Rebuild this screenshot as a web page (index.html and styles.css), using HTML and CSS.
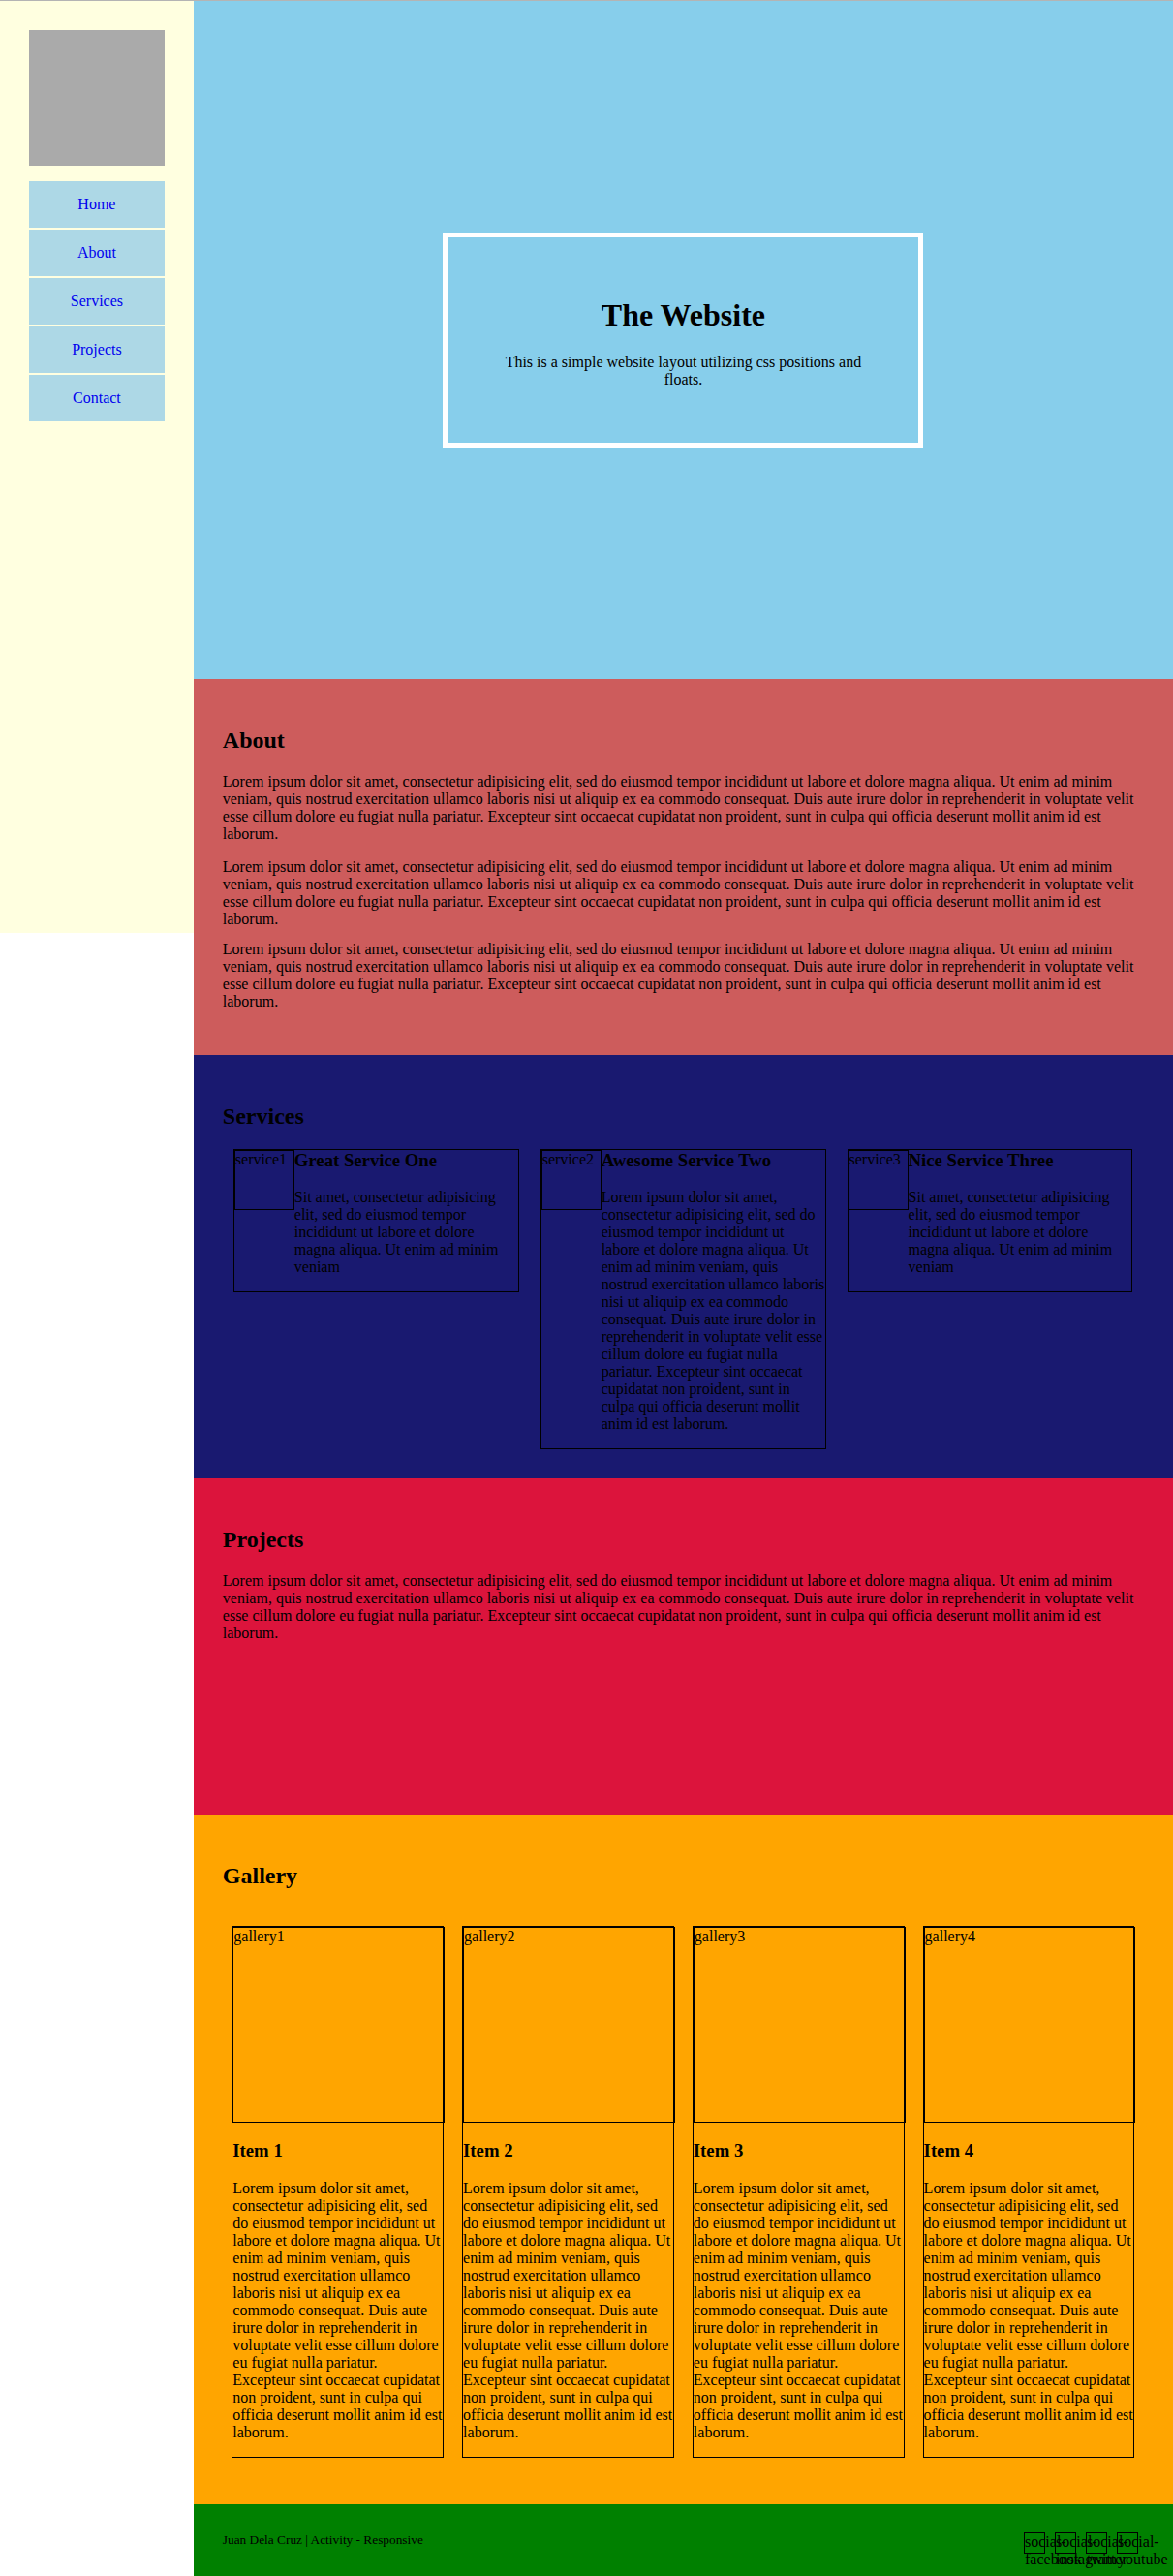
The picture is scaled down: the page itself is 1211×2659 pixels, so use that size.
FILE: index.html
```html
<!DOCTYPE html>
<html lang="en">
<head>
<meta charset="utf-8">
<title>The Website</title>
<link rel="stylesheet" href="styles.css">
</head>
<body>
<div class="page">
  <aside class="sidebar">
    <div class="logo"></div>
    <nav class="nav">
      <a href="#">Home</a>
      <a href="#">About</a>
      <a href="#">Services</a>
      <a href="#">Projects</a>
      <a href="#">Contact</a>
    </nav>
  </aside>
  <main class="main">
    <section class="hero">
      <div class="hero-box">
        <h1>The Website</h1>
        <p>This is a simple website layout utilizing css positions and floats.</p>
      </div>
    </section>

    <section class="section about">
      <h2>About</h2>
      <p>Lorem ipsum dolor sit amet, consectetur adipisicing elit, sed do eiusmod tempor incididunt ut labore et dolore magna aliqua. Ut enim ad minim veniam, quis nostrud exercitation ullamco laboris nisi ut aliquip ex ea commodo consequat. Duis aute irure dolor in reprehenderit in voluptate velit esse cillum dolore eu fugiat nulla pariatur. Excepteur sint occaecat cupidatat non proident, sunt in culpa qui officia deserunt mollit anim id est laborum.</p>
      <p class="about-mid">Lorem ipsum dolor sit amet, consectetur adipisicing elit, sed do eiusmod tempor incididunt ut labore et dolore magna aliqua. Ut enim ad minim veniam, quis nostrud exercitation ullamco laboris nisi ut aliquip ex ea commodo consequat. Duis aute irure dolor in reprehenderit in voluptate velit esse cillum dolore eu fugiat nulla pariatur. Excepteur sint occaecat cupidatat non proident, sunt in culpa qui officia deserunt mollit anim id est laborum.</p>
      <p class="about-last">Lorem ipsum dolor sit amet, consectetur adipisicing elit, sed do eiusmod tempor incididunt ut labore et dolore magna aliqua. Ut enim ad minim veniam, quis nostrud exercitation ullamco laboris nisi ut aliquip ex ea commodo consequat. Duis aute irure dolor in reprehenderit in voluptate velit esse cillum dolore eu fugiat nulla pariatur. Excepteur sint occaecat cupidatat non proident, sunt in culpa qui officia deserunt mollit anim id est laborum.</p>
    </section>

    <section class="section services">
      <h2>Services</h2>
      <div class="service-list">
        <div class="service">
          <div class="service-img">service1</div>
          <div class="service-body">
            <h3>Great Service One</h3>
            <p>Sit amet, consectetur adipisicing elit, sed do eiusmod tempor incididunt ut labore et dolore magna aliqua. Ut enim ad minim veniam</p>
          </div>
        </div>
        <div class="service">
          <div class="service-img">service2</div>
          <div class="service-body">
            <h3>Awesome Service Two</h3>
            <p>Lorem ipsum dolor sit amet, consectetur adipisicing elit, sed do eiusmod tempor incididunt ut labore et dolore magna aliqua. Ut enim ad minim veniam, quis nostrud exercitation ullamco laboris nisi ut aliquip ex ea commodo consequat. Duis aute irure dolor in reprehenderit in voluptate velit esse cillum dolore eu fugiat nulla pariatur. Excepteur sint occaecat cupidatat non proident, sunt in culpa qui officia deserunt mollit anim id est laborum.</p>
          </div>
        </div>
        <div class="service">
          <div class="service-img">service3</div>
          <div class="service-body">
            <h3>Nice Service Three</h3>
            <p>Sit amet, consectetur adipisicing elit, sed do eiusmod tempor incididunt ut labore et dolore magna aliqua. Ut enim ad minim veniam</p>
          </div>
        </div>
      </div>
    </section>

    <section class="section projects">
      <h2>Projects</h2>
      <p>Lorem ipsum dolor sit amet, consectetur adipisicing elit, sed do eiusmod tempor incididunt ut labore et dolore magna aliqua. Ut enim ad minim veniam, quis nostrud exercitation ullamco laboris nisi ut aliquip ex ea commodo consequat. Duis aute irure dolor in reprehenderit in voluptate velit esse cillum dolore eu fugiat nulla pariatur. Excepteur sint occaecat cupidatat non proident, sunt in culpa qui officia deserunt mollit anim id est laborum.</p>
    </section>

    <section class="section gallery">
      <h2>Gallery</h2>
      <div class="gallery-list">
        <div class="gallery-item">
          <div class="gallery-img">gallery1</div>
          <h3>Item 1</h3>
          <p>Lorem ipsum dolor sit amet, consectetur adipisicing elit, sed do eiusmod tempor incididunt ut labore et dolore magna aliqua. Ut enim ad minim veniam, quis nostrud exercitation ullamco laboris nisi ut aliquip ex ea commodo consequat. Duis aute irure dolor in reprehenderit in voluptate velit esse cillum dolore eu fugiat nulla pariatur. Excepteur sint occaecat cupidatat non proident, sunt in culpa qui officia deserunt mollit anim id est laborum.</p>
        </div>
        <div class="gallery-item">
          <div class="gallery-img">gallery2</div>
          <h3>Item 2</h3>
          <p>Lorem ipsum dolor sit amet, consectetur adipisicing elit, sed do eiusmod tempor incididunt ut labore et dolore magna aliqua. Ut enim ad minim veniam, quis nostrud exercitation ullamco laboris nisi ut aliquip ex ea commodo consequat. Duis aute irure dolor in reprehenderit in voluptate velit esse cillum dolore eu fugiat nulla pariatur. Excepteur sint occaecat cupidatat non proident, sunt in culpa qui officia deserunt mollit anim id est laborum.</p>
        </div>
        <div class="gallery-item">
          <div class="gallery-img">gallery3</div>
          <h3>Item 3</h3>
          <p>Lorem ipsum dolor sit amet, consectetur adipisicing elit, sed do eiusmod tempor incididunt ut labore et dolore magna aliqua. Ut enim ad minim veniam, quis nostrud exercitation ullamco laboris nisi ut aliquip ex ea commodo consequat. Duis aute irure dolor in reprehenderit in voluptate velit esse cillum dolore eu fugiat nulla pariatur. Excepteur sint occaecat cupidatat non proident, sunt in culpa qui officia deserunt mollit anim id est laborum.</p>
        </div>
        <div class="gallery-item">
          <div class="gallery-img">gallery4</div>
          <h3>Item 4</h3>
          <p>Lorem ipsum dolor sit amet, consectetur adipisicing elit, sed do eiusmod tempor incididunt ut labore et dolore magna aliqua. Ut enim ad minim veniam, quis nostrud exercitation ullamco laboris nisi ut aliquip ex ea commodo consequat. Duis aute irure dolor in reprehenderit in voluptate velit esse cillum dolore eu fugiat nulla pariatur. Excepteur sint occaecat cupidatat non proident, sunt in culpa qui officia deserunt mollit anim id est laborum.</p>
        </div>
      </div>
    </section>

    <footer class="footer">
      <div class="credit">Juan Dela Cruz | Activity - Responsive</div>
      <div class="socials">
        <div class="social">social-facebook</div>
        <div class="social">social-instagram</div>
        <div class="social">social-twitter</div>
        <div class="social">social-youtube</div>
      </div>
    </footer>
  </main>
</div>
</body>
</html>
```

FILE: styles.css
```css
html, body {
  margin: 0;
  padding: 0;
}

body {
  border-top: 1px solid #b4b4b4;
  font-family: "Liberation Serif", "Times New Roman", serif;
  font-size: 16px;
  color: #000;
  background: #fff;
}

.page {
  display: flex;
  align-items: flex-start;
}

/* Sidebar */
.sidebar {
  flex: none;
  width: 16.5%;
  height: 962px;
  box-sizing: border-box;
  padding-top: 30px;
  background: #ffffe0;
  display: flex;
  flex-direction: column;
  align-items: center;
}

.logo {
  width: 140px;
  height: 140px;
  background: #aaaaaa;
  margin-bottom: 16px;
}

.nav {
  width: 140px;
  display: flex;
  flex-direction: column;
  gap: 2px;
}

.nav a {
  height: 48px;
  display: flex;
  align-items: center;
  justify-content: center;
  background: #add8e6;
  color: #0000ee;
  text-decoration: none;
  line-height: 18px;
}

/* Main */
.main {
  flex: 1;
  min-width: 0;
}

p {
  margin: 16px 0;
  line-height: 18px;
}

h2 {
  font-size: 24px;
  margin: 19.92px 0;
}

h3 {
  font-size: 18.72px;
  margin: 18.72px 0;
}

.hero {
  height: 700px;
  background: #87ceeb;
  display: flex;
  align-items: center;
  justify-content: center;
}

.hero-box {
  width: 406px;
  padding: 40px;
  border: 5px solid #fff;
  text-align: center;
}

.hero-box h1 {
  font-size: 32px;
  margin: 21.44px 0;
}

.section {
  padding: 30px;
}

.about {
  background: #cd5c5c;
}

.about .about-mid {
  margin-bottom: 13px;
}

.about .about-last {
  margin-top: 13px;
}

.services {
  background: #191970;
}

.service-list {
  display: flex;
  align-items: flex-start;
  gap: 22px;
}

.service {
  flex: none;
  width: 31%;
  box-sizing: border-box;
  border: 1px solid #000;
  display: flex;
  align-items: flex-start;
}

.service:first-child {
  margin-left: 11px;
}

.service-img {
  flex: none;
  width: 60px;
  height: 60px;
  border: 1px solid #000;
  line-height: 18px;
}

.service-body {
  flex: 1;
  min-width: 0;
}

.service-body h3 {
  margin-top: 0;
}

.projects {
  background: #dc143c;
  height: 347px;
  box-sizing: border-box;
}

.gallery {
  background: #ffa500;
}

.gallery-list {
  display: flex;
  align-items: flex-start;
}

.gallery-item {
  width: 23%;
  box-sizing: border-box;
  border: 1px solid #000;
  margin: 17.5px 1%;
}

.gallery-img {
  width: 100%;
  height: 200px;
  border: 1px solid #000;
  line-height: 18px;
}

/* Footer */
.footer {
  height: 75px;
  padding: 0 30px;
  background: #008000;
  display: flex;
  align-items: center;
  justify-content: space-between;
}

.credit {
  font-size: 13.33px;
}

.socials {
  display: flex;
  gap: 10px;
  margin-top: 5px;
  margin-right: 6px;
}

.social {
  width: 20px;
  height: 20px;
  border: 1px solid #000;
  line-height: 18px;
}
```
